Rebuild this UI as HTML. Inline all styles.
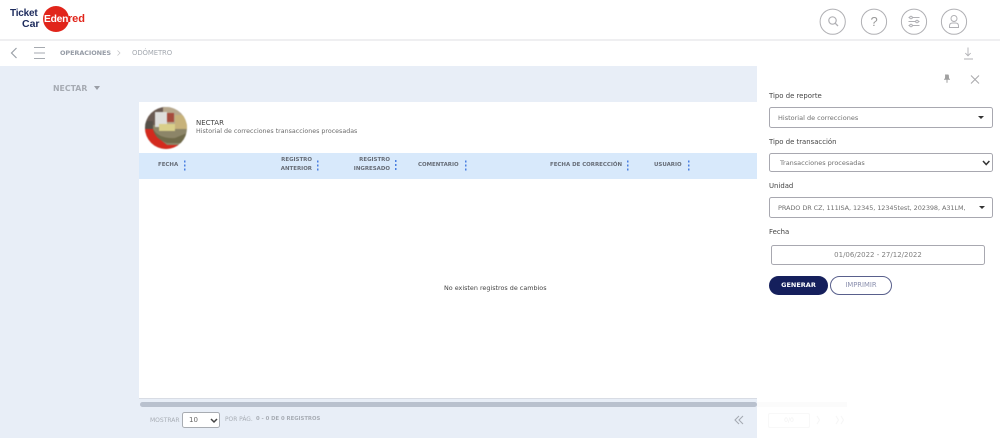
<!DOCTYPE html>
<html><head><meta charset="utf-8"><style>
html,body{margin:0;padding:0}
body{width:1000px;height:438px;overflow:hidden;position:relative;background:#e8eef7;font-family:"DejaVu Sans","Liberation Sans",sans-serif;color:#555}
#w{position:absolute;left:0;top:0;width:1000px;height:438px;overflow:hidden;filter:blur(.35px)}
.a{position:absolute;white-space:nowrap}
.th{font-size:5.45px;font-weight:bold;color:#666c76;text-align:right;line-height:9px}
.lb{font-size:6.9px;color:#444}
.sel{position:absolute;left:769px;width:224px;background:#fff;border:1px solid #a8a8b0;border-radius:2.5px;box-sizing:border-box;font-size:6.5px;color:#707070;white-space:nowrap}
svg{position:absolute;overflow:visible}
</style></head><body><div id="w">
<div class="a" style="left:0;top:0;width:1000px;height:39px;background:#fff"></div>
<div class="a" style="left:0;top:39px;width:1000px;height:2px;background:#efeff1"></div>
<div class="a" style="left:0;top:41px;width:1000px;height:25px;background:#fff"></div>

<div class="a" style="left:10px;top:9px;font:bold 10px/10px 'Liberation Sans',sans-serif;color:#1c2a5c;letter-spacing:-.2px">Ticket</div>
<div class="a" style="left:22px;top:19px;font:bold 10.5px/10.5px 'Liberation Sans',sans-serif;color:#1c2a5c">Car</div>
<div class="a" style="left:43px;top:6px;width:26px;height:26px;border-radius:50%;background:#e1251b"></div>
<div class="a" style="left:44px;top:13.500px;font:bold 10.300px/11px 'Liberation Sans',sans-serif;color:#fff;letter-spacing:-.25px">Eden</div>
<div class="a" style="left:68px;top:13.500px;font:bold 11px/11px 'Liberation Sans',sans-serif;color:#e1251b;letter-spacing:-.1px">red</div>

<svg style="left:0;top:0" width="1000" height="66" fill="none" stroke="#b0b0b4">
<circle cx="832.700" cy="21.700" r="12.600"/><circle cx="874" cy="21.700" r="12.600"/><circle cx="914" cy="21.700" r="12.600"/><circle cx="954" cy="21.700" r="12.600"/>
<circle cx="832.500" cy="20.500" r="3.700" stroke-width="1.200"/><path d="M835.300 23.300l2.700 2.700" stroke-width="1.300"/>
<path d="M908.500 17.500h11M908.500 21.500h11M908.500 25.500h11" stroke-width=".9"/><circle cx="911" cy="17.500" r="1.300" fill="#fff"/><circle cx="917" cy="21.500" r="1.300" fill="#fff"/><circle cx="911" cy="25.500" r="1.300" fill="#fff"/>
<circle cx="954" cy="18.500" r="3" stroke-width="1"/><path d="M949.500 27.500v-1.500q0-3 3-3h3q3 0 3 3v1.500z" stroke-width="1"/>
<path d="M16.500 48l-5 5 5 5" stroke="#9aa0a8" stroke-width="1.200"/>
<path d="M34 47.500h11M34 53h11M34 58.500h11" stroke="#a6aab0" stroke-width="1.100"/>
<path d="M117.500 50.500l2.500 2.500-2.500 2.500" stroke="#c0c0c4" stroke-width=".7"/>
<path d="M968 47.500v8M965.300 53l2.700 2.800 2.700-2.800M964 59h9" stroke="#b0b0b4" stroke-width=".9"/>
</svg>
<div class="a" style="left:874px;top:14px;width:0;font:13px/15px 'Liberation Sans',sans-serif;color:#999"><span style="margin-left:-3.500px">?</span></div>
<div class="a" style="left:60px;top:49px;font-size:6.500px;font-weight:bold;color:#969ca6;letter-spacing:-.1px">OPERACIONES</div>
<div class="a" style="left:132px;top:49px;font-size:6.900px;color:#a4a9b0;letter-spacing:-.1px">ODÓMETRO</div>

<div class="a" style="left:53px;top:84px;font-size:7.800px;font-weight:bold;color:#a6abb3">NECTAR</div>
<div class="a" style="left:94px;top:86px;border:3.500px solid transparent;border-top:4.500px solid #9a9ea6;border-bottom:0"></div>

<div class="a" style="left:139px;top:102px;width:618px;height:296px;background:#fff;border-bottom:1px solid #d8dce4"></div>
<svg style="left:145px;top:107px;filter:blur(.6px)" width="42" height="42" viewBox="0 0 42 42">
<defs><clipPath id="c"><circle cx="21" cy="21" r="21"/></clipPath></defs>
<g clip-path="url(#c)"><rect width="42" height="42" fill="#8c8568"/>
<rect x="0" y="0" width="20" height="18" fill="#6a5a52"/><rect x="18" y="0" width="24" height="20" fill="#b8a98e"/>
<rect x="10" y="5" width="12" height="15" fill="#dededc"/><rect x="22" y="6" width="7" height="9" fill="#a64a3c"/>
<rect x="30" y="8" width="12" height="14" fill="#c7b27a"/><rect x="14" y="17" width="16" height="7" fill="#d9cf8a"/>
<path d="M0 20h7l5 10 10 8h20v4H0z" fill="#d32a1e"/><path d="M8 22q6 10 22 9l12-5v10H22Q10 32 8 22z" fill="#6f6a4a"/>
<rect x="0" y="14" width="8" height="8" fill="#555048"/></g></svg>
<div class="a" style="left:196px;top:118.500px;font-size:7px;color:#444">NECTAR</div>
<div class="a" style="left:196px;top:127.500px;font-size:6.300px;color:#6c6c6c">Historial de correcciones transacciones procesadas</div>

<div class="a" style="left:139px;top:153px;width:618px;height:26px;background:#d8e9fb"></div>
<div class="a th" style="left:158px;top:161px">FECHA</div>
<div class="a th" style="right:688px;top:155.500px">REGISTRO<br>ANTERIOR</div>
<div class="a th" style="right:610px;top:155.500px">REGISTRO<br>INGRESADO</div>
<div class="a th" style="left:418px;top:161px">COMENTARIO</div>
<div class="a th" style="left:550px;top:161px">FECHA DE CORRECCIÓN</div>
<div class="a th" style="left:654px;top:161px">USUARIO</div>
<svg style="left:0;top:0" width="1000" height="200" fill="#4a7fe0">
<g id="d"><rect x="184" y="160.500" width="1.500" height="2"/><rect x="184" y="164.500" width="1.500" height="2"/><rect x="184" y="168.500" width="1.500" height="2"/></g>
<use href="#d" x="133"/><use href="#d" x="211" y="-.5"/><use href="#d" x="281"/><use href="#d" x="443"/><use href="#d" x="504"/>
</svg>
<div class="a" style="left:444px;top:283.500px;font-size:6.400px;color:#444">No existen registros de cambios</div>

<div class="a" style="left:140px;top:402px;width:617px;height:5px;background:#b9c1ce;border-radius:3px"></div>
<div class="a" style="left:150px;top:417px;font-size:6px;color:#a8adb5">MOSTRAR</div>
<div class="a" style="left:182px;top:412px;width:38px;height:16px;background:#fff;border:1px solid #a8acb2;border-radius:2.500px;box-sizing:border-box;font-size:7px;line-height:14px;color:#666;padding-left:6px">10</div>
<svg style="left:0;top:0" width="1000" height="438" fill="none">
<path d="M211 419l3 3 3-3" stroke="#444" stroke-width="1.500"/>
<path d="M739 416l-4 4 4 4M743 416l-4 4 4 4" stroke="#a6abb3" stroke-width="1.100"/>
</svg>
<div class="a" style="left:225px;top:417px;font-size:5.900px;color:#a8adb5">POR PÁG.</div>
<div class="a" style="left:256px;top:416px;font-size:5.300px;font-weight:bold;color:#a8adb5">0 - 0 DE 0 REGISTROS</div>

<div class="a" style="left:757px;top:66px;width:243px;height:372px;background:#fff"></div>
<div class="a" style="left:757px;top:402px;width:90px;height:5px;background:#fbfbfb"></div>
<div class="a" style="left:768px;top:413px;width:42px;height:15px;border:1px solid #f8f8f8;border-radius:2px;box-sizing:border-box;font-size:6px;line-height:13px;text-align:center;color:#f1f1f1">0/0</div>
<svg style="left:0;top:0" width="1000" height="438" fill="none">
<path d="M945 75h3.500M945.700 75l-.3 4h3.200l-.3-4M944 79.300h6M947 79.300v3.500" stroke="#a0a0a0" stroke-width="1" fill="#a0a0a0"/>
<path d="M971 75.500l8 8M979 75.500l-8 8" stroke="#a8a8ac"/>
<path d="M817 416l2.500 4-2.500 4M836 416l2.500 4-2.500 4M841 416l2.500 4-2.500 4" stroke="#f6f6f6"/>
</svg>

<div class="a lb" style="left:769px;top:91.500px">Tipo de reporte</div>
<div class="sel" style="top:107px;height:21px;line-height:20px;padding-left:8px">Historial de correcciones</div>
<div class="a" style="left:978px;top:116px;border:3px solid transparent;border-top:3px solid #333;border-bottom:0"></div>
<div class="a lb" style="left:769px;top:138px">Tipo de transacción</div>
<div class="sel" style="top:153px;height:19px;line-height:18px;padding-left:10px">Transacciones procesadas</div>
<svg style="left:0;top:0" width="1000" height="200" fill="none"><path d="M983 161l3.200 3.500 3.200-3.500" stroke="#333" stroke-width="1.500"/></svg>
<div class="a lb" style="left:769px;top:181.500px">Unidad</div>
<div class="sel" style="top:196.500px;height:21px;line-height:20px;padding-left:8px;letter-spacing:-.08px">PRADO DR CZ, 111ISA, 12345, 12345test, 202398, A31LM,</div>
<div class="a" style="left:979px;top:205.500px;border:3px solid transparent;border-top:3px solid #333;border-bottom:0"></div>
<div class="a lb" style="left:769px;top:227.500px">Fecha</div>
<div class="sel" style="left:771px;top:245px;width:214px;height:20px;line-height:18px;text-align:center;font-size:7px;color:#808080">01/06/2022 - 27/12/2022</div>
<div class="a" style="left:769px;top:276px;width:59px;height:19px;background:#151f5c;border-radius:10px;color:#fff;font-size:6.500px;font-weight:bold;line-height:19px;text-align:center">GENERAR</div>
<div class="a" style="left:830px;top:276px;width:62px;height:19px;background:#fff;border:1px solid #59608c;border-radius:10px;box-sizing:border-box;color:#8b90ae;font-size:6.800px;line-height:17px;text-align:center">IMPRIMIR</div>
</div></body></html>
